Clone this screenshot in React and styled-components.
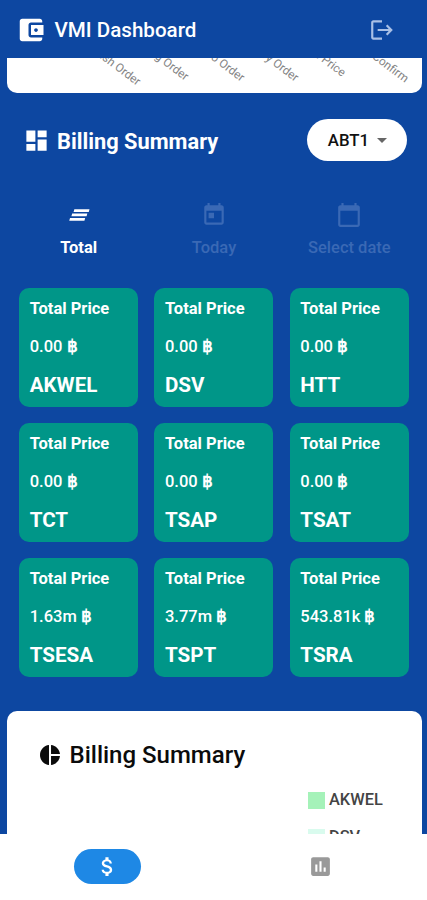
import React from "react";
import styled, { createGlobalStyle } from "styled-components";

const GlobalStyle = createGlobalStyle`
  * { box-sizing: border-box; }
  body { margin: 0; background: #0d47a1; font-family: Roboto, sans-serif; }
`;

const paths = {
  wallet: "M21 18v1c0 1.1-.9 2-2 2H5c-1.11 0-2-.9-2-2V5c0-1.1.89-2 2-2h14c1.1 0 2 .9 2 2v1h-9c-1.11 0-2 .9-2 2v8c0 1.1.89 2 2 2h9zm-9-2h10V8H12v8zm4-2.5c-.83 0-1.5-.67-1.5-1.5s.67-1.5 1.5-1.5 1.5.67 1.5 1.5-.67 1.5-1.5 1.5z",
  logout: "M17 7l-1.41 1.41L18.17 11H8v2h10.17l-2.58 2.58L17 17l5-5zM4 5h8V3H4c-1.1 0-2 .9-2 2v14c0 1.1.9 2 2 2h8v-2H4V5z",
  dashboard: "M3 13h8V3H3v10zm0 8h8v-6H3v6zm10 0h8V11h-8v10zm0-18v6h8V3h-8z",
  clearAll: "M5 13.2h14l.7-2.5H5.7zM3 17.2h14l.7-2.5H3.7zM7 9.2h14l.7-2.5H7.7z",
  today: "M19 3h-1V1h-2v2H8V1H6v2H5c-1.11 0-1.99.9-1.99 2L3 19c0 1.1.89 2 2 2h14c1.1 0 2-.9 2-2V5c0-1.1-.9-2-2-2zm0 16H5V8h14v11zM7 10h5v5H7v-5z",
  calendar: "M20 3h-1V1h-2v2H7V1H5v2H4c-1.1 0-2 .9-2 2v16c0 1.1.9 2 2 2h16c1.1 0 2-.9 2-2V5c0-1.1-.9-2-2-2zm0 18H4V8h16v13z",
  pie: "M11 2v20c-5.07-.5-9-4.79-9-10s3.93-9.5 9-10zm2.03 0v8.99H22c-.47-4.74-4.24-8.52-8.97-8.99zm0 11.01V22c4.74-.47 8.5-4.25 8.97-8.99h-8.97z",
  money: "M11.8 10.9c-2.27-.59-3-1.2-3-2.15 0-1.09 1.01-1.85 2.7-1.85 1.78 0 2.44.85 2.5 2.1h2.21c-.07-1.72-1.12-3.3-3.21-3.81V3h-3v2.16c-1.94.42-3.5 1.68-3.5 3.61 0 2.31 1.91 3.46 4.7 4.13 2.5.6 3 1.48 3 2.41 0 .69-.49 1.79-2.7 1.79-2.06 0-2.87-.92-2.98-2.1h-2.2c.12 2.19 1.76 3.42 3.68 3.83V21h3v-2.15c1.95-.37 3.5-1.5 3.5-3.55 0-2.84-2.43-3.81-4.7-4.4z",
  chart: "M19 3H5c-1.1 0-2 .9-2 2v14c0 1.1.9 2 2 2h14c1.1 0 2-.9 2-2V5c0-1.1-.9-2-2-2zM9 17H7v-7h2v7zm4 0h-2V7h2v10zm4 0h-2v-4h2v4z",
  dropdown: "M7 10l5 5 5-5z",
};

const Svg = styled.svg`
  display: block;
  flex: none;
  width: ${(p) => p.$size}px;
  height: ${(p) => p.$size}px;
  fill: currentColor;
`;
const Icon = ({ name, size }) => (
  <Svg viewBox="0 0 24 24" $size={size} aria-hidden="true"><path d={paths[name]} /></Svg>
);

const Screen = styled.div`
  width: 427px;
  height: 900px;
  display: flex;
  flex-direction: column;
  overflow: hidden;
  background: #0d47a1;
`;
const AppBar = styled.header`
  flex: none;
  height: 58px;
  display: flex;
  align-items: center;
  padding: 1px 32px 0 16px;
  color: #fff;
`;
const AppTitle = styled.h1`
  flex: 1;
  margin: 1px 0 0 8.5px;
  font-size: 20.6px;
  line-height: 28px;
  font-weight: 500;
`;
const LogoutButton = styled.button`
  padding: 0;
  border: 0;
  background: none;
  color: #a9c0e6;
`;
const Content = styled.main`
  flex: 1;
  min-height: 0;
  overflow: hidden;
`;
const ChartCard = styled.section`
  height: 35px;
  margin: 0 5px 0 7px;
  background: #fff;
  border-radius: 0 0 10px 10px;
  overflow: hidden;
`;
const AxisLabels = styled.svg`
  display: block;
  width: 415px;
  height: 35px;
  font-size: 11.8px;
  fill: #858585;
  text-anchor: end;
`;
const SectionHeader = styled.div`
  height: 50px;
  margin-top: 22px;
  padding: 0 20px 0 23px;
  display: flex;
  align-items: center;
  color: #fff;
`;
const Heading = styled.h2`
  flex: 1;
  margin: 0;
  padding: ${(p) => (p.$dark ? "1px 0 0 7.5px" : "3px 0 0 7px")};
  font-size: ${(p) => (p.$dark ? 24 : 21.8)}px;
  line-height: 30px;
  font-weight: ${(p) => (p.$dark ? 500 : 700)};
`;
const Select = styled.button`
  width: 100px;
  height: 42px;
  display: flex;
  align-items: center;
  justify-content: center;
  gap: 1px;
  padding: 0 0 0 8px;
  border: 0;
  border-radius: 21px;
  background: #fff;
  color: #111;
  font: 500 16.8px/24px Roboto, sans-serif;
`;
const Caret = styled.span`
  color: #666;
`;
const Tabs = styled.nav`
  display: grid;
  grid-template-columns: repeat(3, 1fr);
  padding: 0 10px 0 11px;
  margin-top: 36.5px;
  height: 86px;
`;
const Tab = styled.button`
  display: flex;
  flex-direction: column;
  align-items: center;
  gap: 8px;
  padding: 0;
  border: 0;
  background: none;
  color: ${(p) => (p.$active ? "#fff" : "#3a69b5")};
  font: ${(p) => (p.$active ? 700 : 500)} 16.5px/24px Roboto, sans-serif;
`;
const Grid = styled.div`
  display: grid;
  grid-template-columns: repeat(3, 119px);
  grid-auto-rows: 119px;
  gap: 16.3px;
  padding-left: 19.2px;
`;
const Card = styled.article`
  display: flex;
  flex-direction: column;
  justify-content: space-between;
  padding: 9px 10.5px 8px;
  border-radius: 10px;
  background: #009688;
  color: #fff;
`;
const CardLabel = styled.div`
  font-size: 16.5px;
  line-height: 24px;
  font-weight: 700;
`;
const Amount = styled.div`
  padding-top: 2px;
  font-size: 16.5px;
  line-height: 24px;
  font-weight: 500;
`;
const Baht = styled.span`
  font-weight: 900;
`;
const Customer = styled.div`
  font-size: 20.6px;
  line-height: 28px;
  font-weight: 700;
`;
const SummaryCard = styled.section`
  height: 200px;
  margin: 34px 5px 0 7px;
  border-radius: 10px 10px 0 0;
  background: #fff;
`;
const SummaryHeader = styled.div`
  display: flex;
  align-items: center;
  padding: 28px 0 0 31px;
  color: #0b0b0b;
`;
const Legend = styled.ul`
  display: flex;
  flex-direction: column;
  gap: 13px;
  margin: 18px 0 0;
  padding: 0 0 0 301px;
  list-style: none;
`;
const LegendItem = styled.li`
  display: flex;
  align-items: center;
  gap: 4px;
  color: #444;
  font-size: 16.4px;
  line-height: 24px;
  font-weight: 500;
`;
const Swatch = styled.span`
  width: 17px;
  height: 17px;
  background: ${(p) => p.$color};
`;
const BottomNav = styled.nav`
  flex: none;
  height: 66px;
  display: grid;
  grid-template-columns: 1fr 1fr;
  justify-items: center;
  align-items: center;
  padding: 0 0 1px 1px;
  background: #fff;
`;
const NavItem = styled.button`
  display: flex;
  align-items: center;
  justify-content: center;
  width: 67px;
  height: 35px;
  padding: 0;
  border: 0;
  border-radius: 18px;
  background: ${(p) => (p.$active ? "#1e88e5" : "transparent")};
  color: ${(p) => (p.$active ? "#fff" : "#999")};
`;

const axis = [
  ["Finish Order", 130, 28],
  ["Pending Order", 178, 23],
  ["To Order", 234, 24],
  ["Delivery Order", 288, 24],
  ["Total Price", 335, 19],
  ["Confirm", 398, 25],
];
const customers = [
  ["AKWEL", "0.00"], ["DSV", "0.00"], ["HTT", "0.00"],
  ["TCT", "0.00"], ["TSAP", "0.00"], ["TSAT", "0.00"],
  ["TSESA", "1.63m"], ["TSPT", "3.77m"], ["TSRA", "543.81k"],
];

export default function App() {
  return (
    <Screen>
      <GlobalStyle />
      <AppBar>
        <Icon name="wallet" size={30} />
        <AppTitle>VMI Dashboard</AppTitle>
        <LogoutButton aria-label="Log out"><Icon name="logout" size={26} /></LogoutButton>
      </AppBar>
      <Content>
        <ChartCard>
          <AxisLabels>
            {axis.map(([label, x, y]) => (
              <text key={label} transform={`translate(${x} ${y}) rotate(37)`}>{label}</text>
            ))}
          </AxisLabels>
        </ChartCard>
        <SectionHeader>
          <Icon name="dashboard" size={27} />
          <Heading>Billing Summary</Heading>
          <Select>ABT1<Caret><Icon name="dropdown" size={24} /></Caret></Select>
        </SectionHeader>
        <Tabs>
          <Tab $active><Icon name="clearAll" size={26} />Total</Tab>
          <Tab><Icon name="today" size={26} />Today</Tab>
          <Tab><Icon name="calendar" size={26} />Select date</Tab>
        </Tabs>
        <Grid>
          {customers.map(([name, amount]) => (
            <Card key={name}>
              <CardLabel>Total Price</CardLabel>
              <Amount>{amount} <Baht>฿</Baht></Amount>
              <Customer>{name}</Customer>
            </Card>
          ))}
        </Grid>
        <SummaryCard>
          <SummaryHeader>
            <Icon name="pie" size={24} />
            <Heading as="h3" $dark>Billing Summary</Heading>
          </SummaryHeader>
          <Legend>
            <LegendItem><Swatch $color="#a5f2b9" />AKWEL</LegendItem>
            <LegendItem><Swatch $color="#d9fbee" />DSV</LegendItem>
          </Legend>
        </SummaryCard>
      </Content>
      <BottomNav>
        <NavItem $active aria-label="Billing"><Icon name="money" size={25} /></NavItem>
        <NavItem aria-label="Reports"><Icon name="chart" size={25} /></NavItem>
      </BottomNav>
    </Screen>
  );
}
